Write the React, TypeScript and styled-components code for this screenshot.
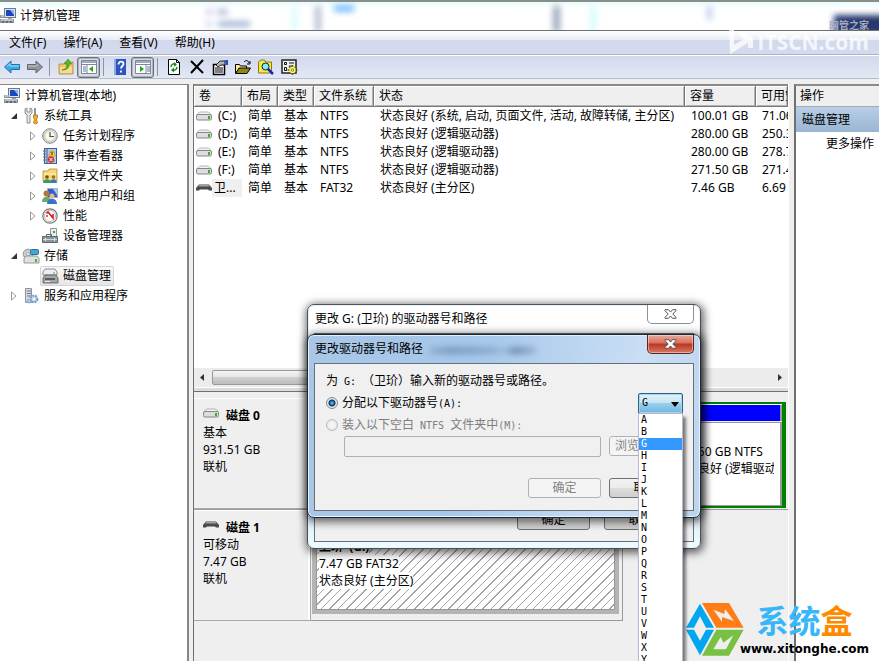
import React from "react";
import styled, { createGlobalStyle, css } from "styled-components";

const UI_FONT = '"Noto Sans", "Noto Sans CJK SC", sans-serif';

const GlobalStyle = createGlobalStyle`
  * { box-sizing: border-box; }
  body {
    margin: 0;
    font: 12px/18px ${UI_FONT};
    color: #000;
    text-spacing-trim: space-all;
  }
  button, select, input { font: inherit; color: inherit; margin: 0; }
`;

const Page = styled.div`
  position: relative;
  height: 100vh;
  overflow: hidden;
  display: flex;
  flex-direction: column;
  background: #efefef;
  white-space: nowrap;
`;

/* ---------- title, menu, toolbar ---------- */

const TitleBar = styled.header`
  height: 31px;
  flex: none;
  display: flex;
  align-items: center;
  gap: 4px;
  border-top: 2px solid #8d8d88;
  border-bottom: 1px solid #6e6e6e;
  overflow: hidden;
  position: relative;
  background: linear-gradient(#e4fdff, #fff 6px);
`;
const Title = styled.h1`
  margin: 0;
  font-size: 12px;
  font-weight: 400;
  line-height: 28px;
  position: relative;
`;
const Haze = styled.i<{ $x: number; $y: number; $w: number; $h: number; $c: string }>`
  position: absolute;
  left: ${(p) => p.$x}px;
  top: ${(p) => p.$y}px;
  width: ${(p) => p.$w}px;
  height: ${(p) => p.$h}px;
  background: ${(p) => p.$c};
  filter: blur(3px);
`;
const MenuBar = styled.nav`
  height: 24px;
  flex: none;
  display: flex;
  gap: 1px;
  padding-left: 1px;
  border-bottom: 1px solid #b0b2bc;
  background: linear-gradient(#fff, #e9ecf6 9px, #d3d9ec 9px, #d5dbee);
`;
const MenuItem = styled.button`
  border: 0;
  background: none;
  padding: 0 8px;
`;
const ToolBar = styled.div`
  height: 24px;
  flex: none;
  display: flex;
  align-items: center;
  border-top: 1px solid #fff;
  border-bottom: 1px solid #b4bccf;
  background: linear-gradient(#d3d9ec, #e3e8f5);
`;
const ToolButton = styled.button<{ $pressed?: boolean }>`
  width: 23px;
  height: 21px;
  padding: 0;
  border: 0;
  background: none;
  display: flex;
  align-items: center;
  justify-content: center;
  ${(p) =>
    p.$pressed &&
    css`
      border: 1px solid #6b6f78;
      border-radius: 3px;
      background: #d9dce4;
      box-shadow: inset 0 0 0 1px #aeb3bf;
    `}
`;
const Separator = styled.span`
  width: 1px;
  height: 18px;
  margin: 0 4px 0 3px;
  background: #8f94a3;
`;
const Icon = styled.svg`
  width: 16px;
  height: 16px;
  flex: none;
  display: block;
  overflow: visible;
`;

/* ---------- body columns ---------- */

const Body = styled.main`
  flex: 1;
  min-height: 0;
  margin-top: 5px;
  display: flex;
  gap: 4px;
`;
const TreePane = styled.aside`
  width: 189px;
  flex: none;
  background: #fff;
  border-top: 1px solid #828790;
  border-right: 2px solid #828790;
  padding-top: 1px;
`;
const TreeList = styled.ul`
  list-style: none;
  margin: 0;
  padding: 0;
`;
const TreeRow = styled.li<{ $depth: number }>`
  height: 20px;
  display: flex;
  align-items: center;
  padding-left: ${(p) => (p.$depth ? p.$depth * 19 - 11 : 2)}px;
`;
const Arrow = styled.span`
  width: 13px;
  flex: none;
`;
const Node = styled.span<{ $selected?: boolean }>`
  display: flex;
  align-items: center;
  gap: 5px;
  height: 20px;
  padding: 0 3px 0 2px;
  ${(p) =>
    p.$selected &&
    css`
      border-radius: 2px;
      box-shadow: inset 0 0 0 1px #d4d4d4;
      background: linear-gradient(#fafafa, #e5e5e5);
    `}
`;
const Center = styled.section`
  flex: 1;
  min-width: 0;
  display: flex;
  flex-direction: column;
  border-left: 1px solid #6f6f6f;
  border-right: 1px solid #fff;
  margin-right: 1px;
`;
const VolumePane = styled.div`
  flex: 0 0 308px;
  display: flex;
  flex-direction: column;
  overflow: hidden;
  background: #fff;
  border-top: 2px solid #8a8a8a;
  border-bottom: 1px solid #707070;
`;
const VolumeScroll = styled.div`
  flex: 1;
  overflow: hidden;
`;
const VolumeTable = styled.table`
  width: 100%;
  min-width: 594px;
  table-layout: fixed;
  border-collapse: separate;
  border-spacing: 0;
  th {
    height: 21px;
    padding: 0 0 0 5px;
    text-align: left;
    font-weight: 400;
    background: #efefef;
    border-right: 1px solid #777;
    border-bottom: 1px solid #777;
    box-shadow: inset 1px 1px #fff, inset -1px -1px #b5b5b5;
    overflow: hidden;
  }
  td {
    height: 18px;
    padding: 0 0 0 6px;
    line-height: 18px;
    overflow: hidden;
  }
  td:first-child { padding-left: 2px; }
`;
const Col = styled.col<{ $w?: number }>`
  width: ${(p) => (p.$w ? `${p.$w}px` : "auto")};
`;
const VolumeName = styled.span<{ $marked?: boolean }>`
  display: flex;
  align-items: center;
  height: 18px;
  gap: ${(p) => (p.$marked ? 0 : 6)}px;
`;
const Marked = styled.span`
  flex: 1;
  height: 18px;
  background: #efefef;
  padding-left: 2px;
`;
const ScrollTrack = styled.div`
  height: 19px;
  flex: none;
  display: flex;
  align-items: center;
  justify-content: space-between;
  padding: 0 6px;
  gap: 8px;
  background: #ececec;
`;
const ScrollThumb = styled.div`
  height: 15px;
  width: 300px;
  margin-right: auto;
  border: 1px solid #999;
  border-radius: 2px;
  background: linear-gradient(#f5f5f5, #e3e3e3 50%, #cfcfcf 50%, #bdbdbd);
`;
const PaneEdge = styled.div`
  height: 4px;
  flex: none;
  background: #dcdcdc;
  border-top: 1px solid #fff;
`;
const DiskPane = styled.div`
  flex: 1;
  overflow: hidden;
  padding-top: 6px;
`;
const DiskRow = styled.div<{ $fit?: boolean }>`
  display: flex;
  height: ${(p) => (p.$fit ? 111 : 112)}px;
  border-bottom: ${(p) => (p.$fit ? "0" : "1px solid #9b9b9b")};
`;
const DiskLabel = styled.div`
  width: 117px;
  flex: none;
  padding: 8px 0 0 9px;
  line-height: 17px;
  border-top: 1px solid #fff;
  border-right: 1px solid #a8a8a8;
  border-bottom: 1px solid #a8a8a8;
  box-shadow: inset -2px 0 #fff;
`;
const DiskName = styled.strong`
  display: flex;
  gap: 7px;
  font-weight: 700;
  svg { margin-top: -2px; }
`;
const Extended = styled.div`
  flex: 1;
  display: flex;
  justify-content: flex-end;
  margin: 4px 2px 1px 1px;
  border: solid #008000;
  border-width: 2px 4px 2px 4px;
`;
const Partition = styled.div`
  width: 111px;
  border-top: 1px solid #fff;
  display: flex;
  flex-direction: column;
`;
const PartitionBar = styled.div`
  height: 16px;
  background: #00f;
  border-right: 2px solid #999;
`;
const PartitionBody = styled.div`
  flex: 1;
  overflow: hidden;
  margin-top: 1px;
  padding: 20px 6px 0 3px;
  line-height: 17px;
  border: solid #999;
  border-width: 1px 2px 1px 0;
  background: #fff;
  div { overflow: hidden; }
`;
const SelectedFrame = styled.div`
  width: 312px;
  padding: 0 3px 6px 1px;
  border-right: 1px solid #999;
  border-bottom: 1px solid #999;
  background: #efefef;
`;
const Hatched = styled.div`
  height: 100%;
  border: solid #b4b4b4;
  border-width: 3px 4px 4px 4px;
  display: flex;
  flex-direction: column;
  align-items: flex-start;
  padding: 25px 0 0 3px;
  line-height: 17px;
  background: repeating-linear-gradient(135deg, #fff 0 5px, #a4a4a4 5px 6px);
  box-shadow: inset 0 0 0 1px #999;
  > * { background: #fff; }
`;
const ActionsPane = styled.aside`
  width: 85px;
  flex: none;
  background: #fff;
  border-top: 2px solid #8a8a8a;
  border-left: 2px solid #707070;
  overflow: hidden;
`;
const ActionsHeader = styled.div`
  height: 21px;
  padding: 1px 4px;
  background: #efefef;
  border-bottom: 1px solid #aaa;
`;
const ActionsGroup = styled.div`
  height: 25px;
  line-height: 25px;
  padding-left: 6px;
  background: linear-gradient(#b7cfe8, #9ab5d3);
`;
const ActionLink = styled.a`
  display: block;
  padding-left: 30px;
  line-height: 24px;
  color: #000;
  text-decoration: none;
`;

/* ---------- dialogs ---------- */

const DialogBox = styled.section<{ $top: number; $height: number; $active?: boolean }>`
  position: absolute;
  left: 307px;
  top: ${(p) => p.$top}px;
  width: 394px;
  height: ${(p) => p.$height}px;
  display: flex;
  flex-direction: column;
  padding: 0 6px 6px;
  border: 1px solid ${(p) => (p.$active ? "#1d2733" : "#505050")};
  border-radius: 7px;
  background: ${(p) =>
    p.$active
      ? "linear-gradient(100deg, #a9c6e6, #a6c8eb 40%, #cadef4 80%, #bcd4ee)"
      : "linear-gradient(#fff, #fdfdfd 40px, #d5e8fb 190px, #eefcff)"};
  box-shadow: inset 0 0 0 1px #e3f3ff, 1px 2px 9px 2px rgba(0, 0, 0, 0.6);
`;
const DialogTitle = styled.div`
  height: 28px;
  flex: none;
  display: flex;
  justify-content: space-between;
  padding-left: 1px;
`;
const DialogName = styled.h2`
  margin: 0;
  font-size: 12px;
  font-weight: 400;
  line-height: 28px;
`;
const CloseButton = styled.button<{ $active?: boolean }>`
  width: 47px;
  height: 19px;
  padding: 0;
  display: flex;
  align-items: center;
  justify-content: center;
  border: 1px solid ${(p) => (p.$active ? "#5c2523" : "#8c9096")};
  border-top: 0;
  border-radius: 0 0 5px 5px;
  background: ${(p) =>
    p.$active ? "linear-gradient(#e9aa9d, #d7705c 8px, #bb3520 9px, #d77a62)" : "#fff"};
  box-shadow: ${(p) => (p.$active ? "inset 0 0 0 1px rgba(255,255,255,.4)" : "none")};
`;
const Client = styled.div`
  flex: 1;
  position: relative;
  border: 1px solid #66707b;
  background: #f0f0f0;
  padding: 6px 10px 11px 11px;
  display: flex;
  flex-direction: column;
`;
const DialogText = styled.p`
  margin: 0;
  line-height: 22px;
`;
const Mono = styled.span`
  font: 10px/12px "DejaVu Sans Mono", monospace;
`;
const ChoiceRow = styled.div`
  display: flex;
  align-items: center;
  justify-content: space-between;
  height: 22px;
`;
const Choice = styled.label<{ $off?: boolean }>`
  display: flex;
  align-items: center;
  gap: 4px;
  color: ${(p) => (p.$off ? "#7d7d7d" : "#000")};
`;
const Radio = styled.input`
  appearance: none;
  width: 12px;
  height: 12px;
  border-radius: 50%;
  border: 1px solid #7f8a96;
  background: radial-gradient(#f4f4f4 40%, #d4d8dc);
  &:checked {
    background: radial-gradient(circle at 50% 50%, #6cc8f4, #1b6fae 2px, #0c2d50 3px, #e6eaee 4px);
  }
  &:disabled { border-color: #bcbcbc; }
`;
const Combo = styled.div`
  position: relative;
  width: 45px;
  height: 21px;
`;
const ComboSelect = styled.select`
  appearance: none;
  width: 100%;
  height: 100%;
  padding: 0 3px;
  border: 1px solid #2c628b;
  border-radius: 2px;
  background: linear-gradient(#e3f2fa, #c5e2f3 50%, #98d1ef 50%, #6db6dd);
  box-shadow: inset 0 0 0 1px #a8d4ea;
  font: 10px/14px "DejaVu Sans Mono", monospace;
`;
const ComboArrow = styled.svg`
  position: absolute;
  right: 4px;
  top: 9px;
  width: 8px;
  height: 5px;
  pointer-events: none;
`;
const ComboList = styled.ul`
  position: absolute;
  z-index: 2;
  left: 0;
  top: 20px;
  width: 45px;
  margin: 0;
  padding: 0;
  list-style: none;
  background: #fff;
  border: 1px solid #b9b5cc;
  box-shadow: 3px 4px 3px rgba(0, 0, 0, 0.5);
`;
const ComboOption = styled.li<{ $on: boolean }>`
  height: 12px;
  padding-left: 2px;
  font: 10px/12px "DejaVu Sans Mono", monospace;
  background: ${(p) => (p.$on ? "#3399ff" : "transparent")};
  color: ${(p) => (p.$on ? "#fff" : "#000")};
`;
const PathRow = styled.div`
  display: flex;
  gap: 8px;
  padding: 0 1px 0 18px;
  overflow: hidden;
`;
const PathInput = styled.input`
  flex: 1;
  min-width: 0;
  height: 21px;
  border: 1px solid #afafaf;
  border-radius: 2px;
  background: #f0f0f0;
`;
const PushButton = styled.button<{ $lead?: boolean }>`
  width: 73px;
  height: 20px;
  padding: ${(p) => (p.$lead ? "0 0 0 5px" : "0")};
  text-align: ${(p) => (p.$lead ? "left" : "center")};
  line-height: 16px;
  border: 1px solid #707070;
  border-radius: 3px;
  background: linear-gradient(#f2f2f2, #ebebeb 50%, #dddddd 50%, #cfcfcf);
  &:disabled {
    color: #838383;
    border-color: #adb2b5;
    background: #f4f4f4;
  }
`;
const ButtonRow = styled.div<{ $under?: boolean }>`
  display: flex;
  justify-content: flex-end;
  gap: ${(p) => (p.$under ? 14 : 8)}px;
  margin-top: auto;
  padding-right: ${(p) => (p.$under ? 6 : 1)}px;
  padding-bottom: ${(p) => (p.$under ? 0 : 1)}px;
`;
const TitleSmudge = styled.i`
  position: absolute;
  left: 122px;
  top: 12px;
  width: 106px;
  height: 7px;
  background: linear-gradient(90deg, rgba(50, 80, 120, 0.2), rgba(50, 80, 120, 0.4) 20%, rgba(50, 80, 120, 0.25) 60%, rgba(50, 80, 120, 0.1) 70%, rgba(40, 70, 110, 0.5) 80%, rgba(50, 80, 120, 0.2));
  filter: blur(3px);
`;

/* ---------- corner marks ---------- */

const TopMark = styled.div`
  position: absolute;
  right: 10px;
  top: 18px;
  display: flex;
  flex-direction: column;
  align-items: flex-end;
  color: rgba(255, 255, 255, 0.75);
`;
const TopMarkSmall = styled.span`
  font: 700 10px/14px "Noto Sans CJK SC", sans-serif;
  color: #a6acc0;
`;
const TopMarkLarge = styled.span`
  display: flex;
  align-items: center;
  gap: 2px;
  font: 700 21px/20px "Open Sans", sans-serif;
  margin-top: -3px;
`;
const SiteMark = styled.div`
  position: absolute;
  right: 10px;
  bottom: 4px;
  display: flex;
  align-items: flex-end;
`;
const SiteWords = styled.div`
  display: flex;
  flex-direction: column;
  align-items: center;
  margin-left: -4px;
`;
const SiteName = styled.span`
  font: 700 32px/44px "Noto Sans CJK SC", sans-serif;
  color: #38b6f8;
`;
const SiteAccent = styled.span`
  color: #ff8a00;
`;
const SiteUrl = styled.span`
  font: 700 12px/16px "DejaVu Sans", sans-serif;
`;

/* ---------- icons ---------- */

const I = (p: { children: React.ReactNode }) => (
  <Icon viewBox="0 0 16 16" aria-hidden="true">{p.children}</Icon>
);

const ComputerIcon = () => (
  <I>
    <rect x="4.500" y=".5" width="11" height="9" fill="#dfe6ee" stroke="#6d7a8d" />
    <path d="M6 2h8v6H6z" fill="#1a46c0" /><path d="M10 2h4v5z" fill="#8db5f5" />
    <path d="M8 10h4v2H8z" fill="#9aa3ad" />
    <path d="M0 7h5v3H0zM0 11h14v4H0z" fill="#8c969e" /><path d="M1 8h3M1 12h12" stroke="#e9edf0" />
    <path d="M2 14h2M6 14h2M10 14h2" stroke="#3c454c" />
  </I>
);
const ToolsIcon = () => (
  <I>
    <path d="M2 1v4l2 2v8h3V7l2-2V1L7 0v4H4V0z" fill="#e3e7ea" stroke="#6e787f" strokeWidth=".8" />
    <path d="M12 0v7" stroke="#8b959c" strokeWidth="2" />
    <path d="M10.500 7h4v3l-1 1 1 4-2 1-2-1 1-4-1-1z" fill="#f0ac22" stroke="#a86c0a" strokeWidth=".7" />
  </I>
);
const ClockIcon = () => (
  <I>
    <circle cx="8" cy="8" r="7.300" fill="#d9dcdf" stroke="#85898e" />
    <circle cx="8" cy="8" r="5.300" fill="#fdf8e4" stroke="#b5b0a0" strokeWidth=".6" />
    <path d="M8 4v4.500h4" fill="none" stroke="#37516f" strokeWidth="1.200" />
  </I>
);
const EventIcon = () => (
  <I>
    <rect x="2.500" y=".5" width="12" height="15" fill="#b8cdee" stroke="#3e5c96" />
    <path d="M5 1v14" stroke="#3e5c96" /><path d="M1 3h3M1 6h3M1 9h3M1 12h3" stroke="#667777" />
    <path d="M7 4h6M7 7h6M7 13h6" stroke="#6f8ec4" />
    <path d="M10 2l4 6H6.500z" fill="#ffcf2d" stroke="#b58500" strokeWidth=".5" /><path d="M10 4v3" stroke="#222" />
    <circle cx="9" cy="11.500" r="3.200" fill="#d5362a" /><path d="M7.500 10l3 3m0-3l-3 3" stroke="#fff" />
  </I>
);
const ShareIcon = () => (
  <I>
    <path d="M1 3h5l1-2h8v12H1z" fill="#f6d877" stroke="#b98d2d" strokeWidth=".8" /><path d="M2 6h12" stroke="#fff3bd" />
    <circle cx="5" cy="9" r="1.800" fill="#704b26" /><path d="M1 15c0-5 8-5 8 0z" fill="#37a052" />
    <circle cx="11.500" cy="9" r="1.800" fill="#9b6b38" /><path d="M8 15c0-5 7-5 7 0z" fill="#3779c6" />
  </I>
);
const UsersIcon = () => (
  <I>
    <rect x="5.500" y=".5" width="10" height="9" fill="#2c5ed0" stroke="#a9b4c2" /><path d="M11 1h4v6z" fill="#a3c5fa" />
    <circle cx="4.500" cy="5.500" r="3" fill="#a9793f" /><path d="M0 14c0-7 9-7 9 0z" fill="#6fa86a" />
    <circle cx="10" cy="8" r="2.500" fill="#e6b98a" /><path d="M5 16c0-7 10-7 10 0z" fill="#3a74c1" />
  </I>
);
const PerfIcon = () => (
  <I>
    <circle cx="8" cy="8" r="7.200" fill="#fff" stroke="#777" strokeWidth="1.200" />
    <circle cx="8" cy="8" r="5.600" fill="none" stroke="#bbb" />
    <path d="M4.500 5.500L6 4l5 6V6" fill="none" stroke="#d81f1f" strokeWidth="1.600" /><path d="M5 7v2" stroke="#d81f1f" strokeWidth="1.400" />
  </I>
);
const DeviceIcon = () => (
  <I>
    <path d="M8.500 .5h6v9h-6z" fill="#e8edf0" stroke="#8f989e" /><path d="M11 4h2" stroke="#3ca12e" strokeWidth="2" />
    <path d="M4.500 8.500V6.500h5v2" fill="none" stroke="#59646c" />
    <path d="M.5 8.500h15v6H.5z" fill="#8a969d" stroke="#5f6a71" /><path d="M1 11.500h14" stroke="#cdd5d9" /><path d="M3.500 10v3M12.500 10v3" stroke="#e5eaed" />
  </I>
);
const StorageIcon = () => (
  <I>
    <circle cx="5" cy="6" r="4.800" fill="#c9ced2" stroke="#7b8388" strokeWidth=".8" /><circle cx="5" cy="6" r="1.500" fill="#fff" stroke="#888" strokeWidth=".6" />
    <rect x="7.500" y="1.500" width="8" height="5" rx="1" fill="#48a4d5" stroke="#28709b" />
    <path d="M1 10l2-2h11l2 2v5H1z" fill="#dde1e4" stroke="#7d858a" strokeWidth=".8" /><path d="M12 11h2v3h-2z" fill="#3db929" />
  </I>
);
const DiskMgmtIcon = () => (
  <I>
    <path d="M1 4l2-3h10l2 3v3H1z" fill="#eceeef" stroke="#777" strokeWidth=".8" /><path d="M11 5h2" stroke="#44bb44" />
    <path d="M1 10l2-3h11l2 3v5H1z" fill="#a1a5a8" stroke="#555" strokeWidth=".8" /><path d="M3 11h10" stroke="#444" strokeWidth="1.500" /><path d="M3 13.500h5" stroke="#eee" />
  </I>
);
const ServicesIcon = () => (
  <I>
    <path d="M2.500 .5h6v14h-6z" fill="#d5dade" stroke="#8a949c" /><path d="M4 3h4M4 5.500h4M4 8h4" stroke="#737d85" />
    <circle cx="11" cy="11" r="3.400" fill="#b7d3ec" stroke="#6f9cc4" strokeWidth="2" strokeDasharray="1.800 1" /><circle cx="11" cy="11" r="1.300" fill="#fff" />
    <circle cx="6" cy="13" r="2" fill="#a9c7e0" stroke="#6f9cc4" strokeDasharray="1 .6" />
  </I>
);
const DriveIcon = () => (
  <I>
    <path d="M1 6.500L3.500 4h9L15 6.500z" fill="#f3f3f5" stroke="#9a9a9e" strokeWidth=".7" />
    <rect x=".5" y="6.500" width="15" height="5.500" rx="1.500" fill="#dcdce2" stroke="#85858c" /><path d="M12 8h2v3h-2z" fill="#2eb512" />
  </I>
);
const RemovableIcon = () => (
  <I>
    <path d="M0 8l3-3.500h10L16 8v2.500h-3l-1-1H4l-1 1H0z" fill="#4a4a4c" /><path d="M2 6.500l1.500-1.500h9L14 6.500z" fill="#a1a1a4" />
  </I>
);
const PanelIcon = ({ right }: { right?: boolean }) => (
  <I>
    <path d="M.5 1.500h15v13H.5z" fill="#fff" stroke="#7e8795" /><path d="M1 3h14" stroke="#9fabc0" strokeWidth="2" /><path d="M1 5.500h14" stroke="#7e8795" />
    <path d={right ? "M11 6v8" : "M6 6v8"} stroke="#7e8795" />
    <path d={right ? "M12 8h3M12 10h3M12 12h3" : "M2 8h3M2 10h3M2 12h3"} stroke="#4c78b8" />
    <path d={right ? "M5 7l4 3-4 3z" : "M12 7l-4 3 4 3z"} fill="#25a322" />
  </I>
);

const toolGroups: { label: string; pressed?: boolean; icon: React.ReactNode }[][] = [
  [
    { label: "后退", icon: <I><path d="M.5 8L7 2v3.500h8.500v5H7V14z" fill="#38a9e4" stroke="#2370a8" /><path d="M3 7.500l3-3V7h9" fill="none" stroke="#a5e0fb" /></I> },
    { label: "前进", icon: <I><path d="M15.500 8L9 2v3.500H.5v5H9V14z" fill="#929499" stroke="#626469" /><path d="M1 7h9V5" fill="none" stroke="#c2c4c8" /></I> },
  ],
  [
    { label: "向上", icon: <I><path d="M1 5h5l1-2h8v12H1z" fill="#efc66a" stroke="#b5862b" strokeWidth=".8" /><path d="M2 8h12v6H2z" fill="#f8dc94" /><path d="M4 11c4-1 5-3 5-6H6.500L10 0l3.500 5H11c0 4-2 6-7 6z" fill="#4cbf27" stroke="#2c8212" strokeWidth=".6" /></I> },
    { label: "显示控制台树", pressed: true, icon: <PanelIcon /> },
  ],
  [
    { label: "帮助", icon: <I><path d="M2 0h12v16H2z" fill="#2c55bd" /><path d="M2 0h2v16H2z" fill="#8ba8e8" /><path d="M6.500 5.500c0-4 5-3.500 5-.5 0 2-2.500 2-2.500 4.500M9 11.500v2" fill="none" stroke="#fff" strokeWidth="1.800" /></I> },
    { label: "显示操作窗格", pressed: true, icon: <PanelIcon right /> },
  ],
  [
    { label: "刷新", icon: <I><path d="M2.500 .5h8l3 3v12h-11z" fill="#fff" stroke="#000" /><path d="M10.500 .5v3h3" fill="none" stroke="#000" /><path d="M5 8c0-3 3-4 5-2.500M11 8c0 3-3 4-5 2.500" fill="none" stroke="#0a8a1c" strokeWidth="1.500" /><path d="M8 3l3 3-3 1.500zM8 8.500v5L5 11z" fill="#0a8a1c" /></I> },
    { label: "删除", icon: <I><path d="M2 2l12 12M14 1L2 14" stroke="#000" strokeWidth="2" /></I> },
    { label: "属性", icon: <I><path d="M1.500 5.500h11v10h-11z" fill="#fff" stroke="#000" strokeWidth="1.500" /><path d="M3 9h8M3 11h8M3 13h8" stroke="#000" /><path d="M4 6l4-4h5v4H9L6 8z" fill="#b5b5b5" stroke="#000" strokeWidth=".8" /><path d="M13 1h3v5h-2z" fill="#234ad0" /></I> },
    { label: "打开", icon: <I><path d="M.5 14V5.500h4l1 1.500h6v2" fill="#fbf38d" stroke="#000" /><path d="M.5 14.500L4 9h11.500L12 14.500z" fill="#8b8711" stroke="#000" /><path d="M9 3c2-2 4-2 5 1M15 2v3h-3" fill="none" stroke="#000" /></I> },
    { label: "查找", icon: <I><path d="M.5 14V3l2-2h4l1 2h6v11z" fill="#f5e650" stroke="#8a7c00" /><circle cx="7.500" cy="7.500" r="3.500" fill="#7ef0f5" stroke="#222" /><path d="M10 10l5 5" stroke="#1424c8" strokeWidth="2.500" /></I> },
    { label: "设置", icon: <I><path d="M1 1h14v13H1z" fill="#f0f0f0" stroke="#222" strokeWidth="1.500" /><path d="M3.500 3.500h2v2h-2zM3.500 8.500h2v3h-2zM8 4h5M8 7h3" fill="none" stroke="#111" /><path d="M11.500 6v10M6.500 11h10M8 7.500l7 7M15 7.500l-7 7" stroke="#5c5200" strokeWidth="1.600" /><circle cx="11.500" cy="11" r="3.200" fill="#fff34d" /><circle cx="11.500" cy="11" r="1.200" fill="#fff" stroke="#333" strokeWidth=".6" /></I> },
  ],
];

const tree: { depth: number; label: string; icon: React.ReactNode; open?: boolean; leaf?: boolean; selected?: boolean }[] = [
  { depth: 0, label: "计算机管理(本地)", icon: <ComputerIcon />, leaf: true },
  { depth: 1, label: "系统工具", icon: <ToolsIcon />, open: true },
  { depth: 2, label: "任务计划程序", icon: <ClockIcon /> },
  { depth: 2, label: "事件查看器", icon: <EventIcon /> },
  { depth: 2, label: "共享文件夹", icon: <ShareIcon /> },
  { depth: 2, label: "本地用户和组", icon: <UsersIcon /> },
  { depth: 2, label: "性能", icon: <PerfIcon /> },
  { depth: 2, label: "设备管理器", icon: <DeviceIcon />, leaf: true },
  { depth: 1, label: "存储", icon: <StorageIcon />, open: true },
  { depth: 2, label: "磁盘管理", icon: <DiskMgmtIcon />, leaf: true, selected: true },
  { depth: 1, label: "服务和应用程序", icon: <ServicesIcon /> },
];

const volumes = [
  ["(C:)", "NTFS", "状态良好 (系统, 启动, 页面文件, 活动, 故障转储, 主分区)", "100.01 GB", "71.06 GB"],
  ["(D:)", "NTFS", "状态良好 (逻辑驱动器)", "280.00 GB", "250.31 GB"],
  ["(E:)", "NTFS", "状态良好 (逻辑驱动器)", "280.00 GB", "278.75 GB"],
  ["(F:)", "NTFS", "状态良好 (逻辑驱动器)", "271.50 GB", "271.40 GB"],
  ["卫...", "FAT32", "状态良好 (主分区)", "7.46 GB", "6.69 GB"],
];

const letters = ["A", "B", ..."GHIJKLMNOPQRSTUVWXYZ"];

const TreeArrow = ({ open }: { open?: boolean }) => (
  <Icon viewBox="0 0 16 16" aria-hidden="true">
    {open ? <path d="M9 5v6H3z" fill="#333" /> : <path d="M3.500 4v8l4.500-4z" fill="#fff" stroke="#999" />}
  </Icon>
);

const CloseGlyph = () => (
  <svg width="13" height="10" viewBox="0 0 13 10" aria-hidden="true">
    <path d="M1 .7h3.500l2 2.300 2-2.300H12v1L8.800 5 12 8.300v1H8.500l-2-2.300-2 2.300H1v-1L4.200 5 1 1.700z" fill="#fff" stroke="#50545f" />
  </svg>
);

export default function App() {
  return (
    <Page>
      <GlobalStyle />
      <TitleBar>
        <Haze $x={206} $y={7} $w={7} $h={6} $c="#d5cdee" />
        <Haze $x={217} $y={7} $w={11} $h={6} $c="#b5c0de" />
        <Haze $x={206} $y={20} $w={6} $h={5} $c="#c2cfea" />
        <Haze $x={218} $y={19} $w={32} $h={6} $c="#a5b6d4" />
        <Haze $x={292} $y={4} $w={5} $h={24} $c="#d5fbff" />
        <Haze $x={315} $y={4} $w={6} $h={26} $c="#b3bfd2" />
        <Haze $x={334} $y={3} $w={20} $h={7} $c="#7cc0fb" />
        <Haze $x={553} $y={4} $w={7} $h={26} $c="#99a8bc" />
        <Haze $x={590} $y={4} $w={6} $h={26} $c="#d5fbff" />
        <Haze $x={707} $y={4} $w={5} $h={14} $c="#bfcdf0" />
        <Haze $x={834} $y={13} $w={60} $h={20} $c="#27376f" />
        <ComputerIcon />
        <Title>计算机管理</Title>
      </TitleBar>
      <MenuBar>
        {["文件(F)", "操作(A)", "查看(V)", "帮助(H)"].map((m) => (
          <MenuItem key={m}>{m}</MenuItem>
        ))}
      </MenuBar>
      <ToolBar>
        {toolGroups.map((group, i) => (
          <React.Fragment key={i}>
            {i > 0 && <Separator />}
            {group.map((t) => (
              <ToolButton key={t.label} aria-label={t.label} $pressed={t.pressed}>{t.icon}</ToolButton>
            ))}
          </React.Fragment>
        ))}
      </ToolBar>

      <Body>
        <TreePane>
          <TreeList>
            {tree.map((n) => (
              <TreeRow key={n.label} $depth={n.depth}>
                {n.depth > 0 && <Arrow>{!n.leaf && <TreeArrow open={n.open} />}</Arrow>}
                <Node $selected={n.selected}>{n.icon}{n.label}</Node>
              </TreeRow>
            ))}
          </TreeList>
        </TreePane>

        <Center>
          <VolumePane>
            <VolumeScroll>
              <VolumeTable>
                <colgroup>
                  <Col $w={48} /><Col $w={36} /><Col $w={36} /><Col $w={60} /><Col /><Col $w={71} /><Col $w={32} />
                </colgroup>
                <thead>
                  <tr>{["卷", "布局", "类型", "文件系统", "状态", "容量", "可用空间"].map((h) => <th key={h}>{h}</th>)}</tr>
                </thead>
                <tbody>
                  {volumes.map(([name, fs, status, size, free]) => {
                    const marked = fs === "FAT32";
                    return (
                      <tr key={name}>
                        <td>
                          <VolumeName $marked={marked}>
                            {marked ? <RemovableIcon /> : <DriveIcon />}
                            {marked ? <Marked>{name}</Marked> : name}
                          </VolumeName>
                        </td>
                        <td>简单</td><td>基本</td><td>{fs}</td><td>{status}</td><td>{size}</td><td>{free}</td>
                      </tr>
                    );
                  })}
                </tbody>
              </VolumeTable>
            </VolumeScroll>
            <ScrollTrack>
              <svg width="4" height="7" aria-hidden="true"><path d="M4 0v7L0 3.500z" fill="#333" /></svg>
              <ScrollThumb />
              <svg width="4" height="7" aria-hidden="true"><path d="M0 0v7l4-3.500z" fill="#333" /></svg>
            </ScrollTrack>
            <PaneEdge />
          </VolumePane>
          <DiskPane>
            <DiskRow>
              <DiskLabel>
                <DiskName><DriveIcon />磁盘 0</DiskName>
                <div>基本</div><div>931.51 GB</div><div>联机</div>
              </DiskLabel>
              <Extended>
                <Partition>
                  <PartitionBar />
                  <PartitionBody>
                    <div>271.50 GB NTFS</div>
                    <div>状态良好 (逻辑驱动器)</div>
                  </PartitionBody>
                </Partition>
              </Extended>
            </DiskRow>
            <DiskRow $fit>
              <DiskLabel>
                <DiskName><RemovableIcon />磁盘 1</DiskName>
                <div>可移动</div><div>7.47 GB</div><div>联机</div>
              </DiskLabel>
              <SelectedFrame>
                <Hatched>
                  <strong>卫玠&nbsp; (G:)</strong>
                  <span>7.47 GB FAT32</span>
                  <span>状态良好 (主分区)</span>
                </Hatched>
              </SelectedFrame>
            </DiskRow>
          </DiskPane>
        </Center>

        <ActionsPane>
          <ActionsHeader>操作</ActionsHeader>
          <ActionsGroup>磁盘管理</ActionsGroup>
          <ActionLink href="#more">更多操作</ActionLink>
        </ActionsPane>
      </Body>

      <DialogBox $top={304} $height={245} role="dialog" aria-label="更改 G: (卫玠) 的驱动器号和路径">
        <DialogTitle>
          <DialogName>更改 G: (卫玠) 的驱动器号和路径</DialogName>
          <CloseButton aria-label="关闭"><CloseGlyph /></CloseButton>
        </DialogTitle>
        <Client>
          <ButtonRow $under>
            <PushButton>确定</PushButton>
            <PushButton>取消</PushButton>
          </ButtonRow>
        </Client>
      </DialogBox>

      <DialogBox $top={334} $height={184} $active role="dialog" aria-label="更改驱动器号和路径">
        <TitleSmudge />
        <DialogTitle>
          <DialogName>更改驱动器号和路径</DialogName>
          <CloseButton $active aria-label="关闭"><CloseGlyph /></CloseButton>
        </DialogTitle>
        <Client>
          <DialogText>为<Mono> G: </Mono>（卫玠）输入新的驱动器号或路径。</DialogText>
          <ChoiceRow>
            <Choice>
              <Radio type="radio" name="mode" defaultChecked />
              <span>分配以下驱动器号<Mono>(A):</Mono></span>
            </Choice>
            <Combo>
              <ComboSelect aria-label="驱动器号" defaultValue="G">
                {letters.map((l) => <option key={l}>{l}</option>)}
              </ComboSelect>
              <ComboArrow viewBox="0 0 8 5"><path d="M0 0h8L4 5z" /></ComboArrow>
              <ComboList role="listbox">
                {letters.map((l) => (
                  <ComboOption key={l} role="option" aria-selected={l === "G"} $on={l === "G"}>{l}</ComboOption>
                ))}
              </ComboList>
            </Combo>
          </ChoiceRow>
          <ChoiceRow>
            <Choice $off>
              <Radio type="radio" name="mode" disabled />
              <span>装入以下空白<Mono> NTFS </Mono>文件夹中<Mono>(M):</Mono></span>
            </Choice>
          </ChoiceRow>
          <PathRow>
            <PathInput disabled aria-label="文件夹路径" />
            <PushButton $lead disabled>浏览<Mono>(W)...</Mono></PushButton>
          </PathRow>
          <ButtonRow>
            <PushButton disabled>确定</PushButton>
            <PushButton>取消</PushButton>
          </ButtonRow>
        </Client>
      </DialogBox>

      <TopMark>
        <TopMarkSmall>网管之家</TopMarkSmall>
        <TopMarkLarge>
          <svg width="26" height="25" viewBox="0 0 26 25" aria-hidden="true">
            <path d="M0 0h5v16l10-6-6-4 7-3 8 6v10h-5v-5L1 25z" fill="rgba(255,255,255,.75)" />
          </svg>
          ITSCN.com
        </TopMarkLarge>
      </TopMark>
      <SiteMark>
        <svg width="58" height="54" viewBox="0 0 174 162" aria-hidden="true">
          <path d="M42 2L0 74h24l18-34 18 34h24z" fill="#00a7f0" />
          <path d="M0 80h24l18 33 18-33h24L42 157z" fill="#00a7f0" />
          <path d="M48 0h81l44 74H91zM82 20l26 36V42l36 12-27-36-2 15z" fill="#ff7c16" fillRule="evenodd" />
          <path d="M91 80h82l-44 78H48zM104 102l-22 37h38l22-42-30 22z" fill="#79c143" fillRule="evenodd" />
        </svg>
        <SiteWords>
          <SiteName>系统<SiteAccent>盒</SiteAccent></SiteName>
          <SiteUrl>www.xitonghe.com</SiteUrl>
        </SiteWords>
      </SiteMark>
    </Page>
  );
}
